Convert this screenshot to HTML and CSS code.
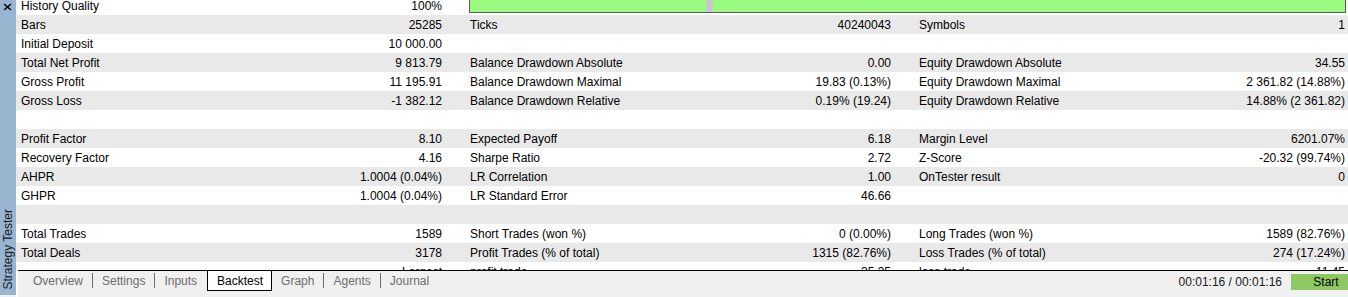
FILE: index.html
```html
<!DOCTYPE html>
<html>
<head>
<meta charset="utf-8">
<link rel="stylesheet" href="styles.css">
</head>
<body>
<div class="app">
  <aside class="sidebar">
    <svg class="close" width="16" height="14" viewBox="0 0 16 14"><path d="M4 4 L11 10 M11 4 L4 10" stroke="#000" stroke-width="1.6" fill="none"/></svg>
    <div class="side-title">Strategy Tester</div>
  </aside>
  <main class="main">
    <div class="report">
      <div class="rows">
        <div class="row">
          <div class="cell"><span>History Quality</span><span>100%</span></div>
          <div class="cell span2"><div class="quality"><div class="q-ok q-a"></div><div class="q-gap"></div><div class="q-ok q-b"></div></div></div>
        </div>
        <div class="row">
          <div class="cell"><span>Bars</span><span>25285</span></div>
          <div class="cell"><span>Ticks</span><span>40240043</span></div>
          <div class="cell last"><span>Symbols</span><span>1</span></div>
        </div>
        <div class="row">
          <div class="cell"><span>Initial Deposit</span><span>10 000.00</span></div>
          <div class="cell"></div>
          <div class="cell last"></div>
        </div>
        <div class="row">
          <div class="cell"><span>Total Net Profit</span><span>9 813.79</span></div>
          <div class="cell"><span>Balance Drawdown Absolute</span><span>0.00</span></div>
          <div class="cell last"><span>Equity Drawdown Absolute</span><span>34.55</span></div>
        </div>
        <div class="row">
          <div class="cell"><span>Gross Profit</span><span>11 195.91</span></div>
          <div class="cell"><span>Balance Drawdown Maximal</span><span>19.83 (0.13%)</span></div>
          <div class="cell last"><span>Equity Drawdown Maximal</span><span>2 361.82 (14.88%)</span></div>
        </div>
        <div class="row">
          <div class="cell"><span>Gross Loss</span><span>-1 382.12</span></div>
          <div class="cell"><span>Balance Drawdown Relative</span><span>0.19% (19.24)</span></div>
          <div class="cell last"><span>Equity Drawdown Relative</span><span>14.88% (2 361.82)</span></div>
        </div>
        <div class="row"></div>
        <div class="row">
          <div class="cell"><span>Profit Factor</span><span>8.10</span></div>
          <div class="cell"><span>Expected Payoff</span><span>6.18</span></div>
          <div class="cell last"><span>Margin Level</span><span>6201.07%</span></div>
        </div>
        <div class="row">
          <div class="cell"><span>Recovery Factor</span><span>4.16</span></div>
          <div class="cell"><span>Sharpe Ratio</span><span>2.72</span></div>
          <div class="cell last"><span>Z-Score</span><span>-20.32 (99.74%)</span></div>
        </div>
        <div class="row">
          <div class="cell"><span>AHPR</span><span>1.0004 (0.04%)</span></div>
          <div class="cell"><span>LR Correlation</span><span>1.00</span></div>
          <div class="cell last"><span>OnTester result</span><span>0</span></div>
        </div>
        <div class="row">
          <div class="cell"><span>GHPR</span><span>1.0004 (0.04%)</span></div>
          <div class="cell"><span>LR Standard Error</span><span>46.66</span></div>
          <div class="cell last"></div>
        </div>
        <div class="row"></div>
        <div class="row">
          <div class="cell"><span>Total Trades</span><span>1589</span></div>
          <div class="cell"><span>Short Trades (won %)</span><span>0 (0.00%)</span></div>
          <div class="cell last"><span>Long Trades (won %)</span><span>1589 (82.76%)</span></div>
        </div>
        <div class="row">
          <div class="cell"><span>Total Deals</span><span>3178</span></div>
          <div class="cell"><span>Profit Trades (% of total)</span><span>1315 (82.76%)</span></div>
          <div class="cell last"><span>Loss Trades (% of total)</span><span>274 (17.24%)</span></div>
        </div>
        <div class="row">
          <div class="cell"><span></span><span>Largest</span></div>
          <div class="cell"><span>profit trade</span><span>35.35</span></div>
          <div class="cell last"><span>loss trade</span><span>-11.45</span></div>
        </div>
      </div>
    </div>
    <div class="tabbar">
      <div class="tab">Overview</div>
      <div class="sep"></div>
      <div class="tab">Settings</div>
      <div class="sep"></div>
      <div class="tab">Inputs</div>
      <div class="tab active">Backtest</div>
      <div class="tab">Graph</div>
      <div class="sep"></div>
      <div class="tab">Agents</div>
      <div class="sep"></div>
      <div class="tab">Journal</div>
      <div class="status">
        <span class="time">00:01:16 / 00:01:16</span>
        <div class="start">Start</div>
      </div>
    </div>
  </main>
</div>
</body>
</html>
```

FILE: styles.css
```css
html, body {
  margin: 0;
  padding: 0;
  width: 1348px;
  height: 297px;
  overflow: hidden;
  background: #f0f0f0;
  font-family: "Liberation Sans", Arial, sans-serif;
  font-size: 12px;
  color: #000;
}

.app {
  display: flex;
  height: 297px;
}

.sidebar {
  width: 16px;
  flex: 0 0 16px;
  height: 295px;
  background: #99b4d1;
  display: flex;
  flex-direction: column;
  justify-content: space-between;
  align-items: center;
}

.close {
  display: block;
  margin-top: 0;
}

.side-title {
  writing-mode: vertical-rl;
  transform: rotate(180deg);
  color: #1a1a1a;
  line-height: 16px;
  margin-bottom: 6px;
  white-space: nowrap;
}

.main {
  flex: 1;
  min-width: 0;
  display: flex;
  flex-direction: column;
  background: #fff;
}

.report {
  height: 270px;
  overflow: hidden;
  background: #fff;
}

.rows {
  margin-top: -4px;
}

.row {
  display: grid;
  grid-template-columns: 449px 449px 434px;
  height: 19px;
}

.row:nth-child(even) {
  background: #e9e9e9;
}

.cell {
  display: flex;
  justify-content: space-between;
  box-sizing: border-box;
  height: 19px;
  padding: 2px 23px 0 5px;
  line-height: 17px;
  white-space: nowrap;
}

.cell.last {
  padding-right: 3px;
}

.cell.span2 {
  grid-column: 2 / 4;
  padding: 0;
  display: block;
}

.quality {
  display: flex;
  margin: 2px 2px 0 4px;
  height: 13px;
  border: 1px solid #5c5c5c;
  background: #99fb80;
}

.q-a {
  width: 236px;
}

.q-gap {
  width: 7px;
  background: #c8c8c8;
}

.q-b {
  flex: 1;
}

.tabbar {
  height: 26px;
  border-top: 1px solid #000;
  margin-left: 2px;
  background: #f0f0f0;
  display: flex;
  align-items: flex-start;
  padding-left: 6px;
}

.tab {
  padding: 1px 9px 0 9px;
  height: 18px;
  line-height: 18px;
  color: #6d6d6d;
  white-space: nowrap;
}

.tab.active {
  background: #fff;
  color: #000;
  border: 1px solid #000;
  border-top: none;
  padding: 1px 8px 0 9px;
  margin-left: 1px;
}

.sep {
  width: 1px;
  height: 15px;
  margin-top: 2px;
  background: #6d6d6d;
}

.status {
  margin-left: auto;
  display: flex;
  align-items: flex-start;
  gap: 9px;
}

.time {
  line-height: 20px;
  margin-top: 1px;
  color: #1a1a1a;
  white-space: nowrap;
}

.start {
  width: 70px;
  height: 16px;
  margin-top: 3px;
  margin-right: -13px;
  background: #8ec863;
  line-height: 17px;
  text-align: center;
  color: #000;
}
```
